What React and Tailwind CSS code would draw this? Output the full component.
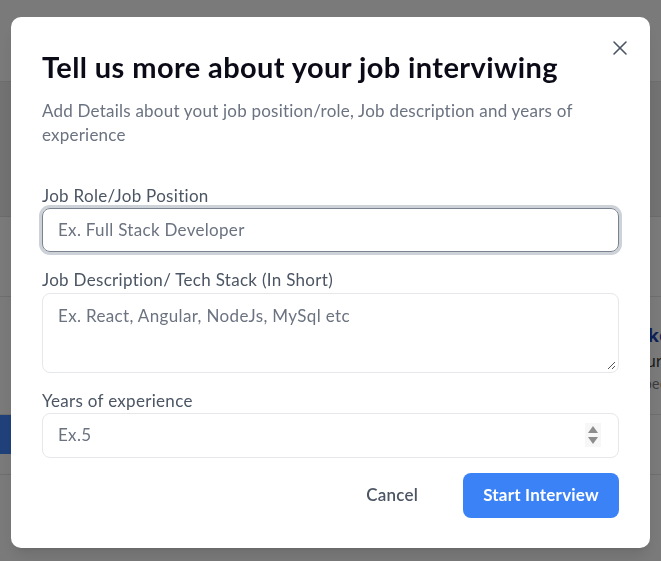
import { X } from 'lucide-react'

const font = { fontFamily: 'Lato, "Noto Sans", sans-serif' }

// dimmed dashboard that sits behind the dialog
const Backdrop = () => {
  return (
    <div className="h-[561px] overflow-hidden bg-[#f4f4f4]">
      <div className="h-[82px] border-b border-[#dadada]" />
      <div className="h-[135px] bg-[#e5e5e5] border-b border-[#d6d6d6]" />
      <div className="h-[80px] border-b border-[#dcdcdc]" />
      <div className="grid grid-cols-[628px_1fr] h-[118px] border-b border-[#dcdcdc]">
        <div />
        <div className="pt-[26px] whitespace-nowrap overflow-hidden">
          <div className="text-[18px] font-bold text-[#1e40af] leading-[24px]">Take a mock</div>
          <div className="mt-[2px] text-[16px] text-[#333] leading-[24px]">Your next</div>
          <div className="text-[14px] text-[#777] leading-[22px]">Expected</div>
        </div>
      </div>
      <div className="h-[39px] w-[220px] bg-[#3f83f5]" />
      <div className="h-[21px] border-b border-[#dcdcdc]" />
    </div>
  )
}

const Label = ({ children, className = '' }) => (
  <label className={`block text-[17px] leading-[24px] tracking-[0.3px] text-[#4b5563] ${className}`}>
    {children}
  </label>
)

const Spinner = () => (
  <svg width="16" height="24" viewBox="0 0 16 24" className="shrink-0">
    <rect width="16" height="24" fill="#f7f7f7" />
    <path d="M8 3 L13 10 L3 10 Z" fill="#8d8d8d" />
    <path d="M3 14 L13 14 L8 21 Z" fill="#8d8d8d" />
  </svg>
)

const ResizeHandle = () => (
  <svg width="9" height="9" viewBox="0 0 9 9" className="shrink-0">
    <path d="M8 1 L1 8 M8 5 L5 8" stroke="#555" strokeWidth="1" />
  </svg>
)

const InterviewDialog = () => {
  return (
    <div className="relative w-[639px] rounded-[10px] bg-white px-[31px] pt-[33px] pb-[30px] shadow-lg" style={font}>
      <button className="absolute right-[18px] top-[19px] text-[#4b5563]">
        <X size={24} strokeWidth={1.6} />
      </button>

      <h2 className="text-[29px] leading-[34px] font-bold text-[#0b0b18] tracking-[0.4px]">
        Tell us more about your job interviwing
      </h2>
      <p className="mt-[15px] text-[17px] leading-[24px] tracking-[0.22px] text-[#6b7280]">
        Add Details about yout job position/role, Job description and years of experience
      </p>

      <Label className="mt-[37px]">Job Role/Job Position</Label>
      <div className="h-[44px] rounded-[8px] border border-[#7b8290] ring-[3px] ring-[#cdd2d9] flex items-center px-[15px]">
        <input
          className="w-full bg-transparent outline-none text-[17px] tracking-[0.3px] text-[#6b7280] placeholder:text-[#6b7280]"
          placeholder="Ex. Full Stack Developer"
          style={font}
        />
      </div>

      <Label className="mt-4">Job Description/ Tech Stack (In Short)</Label>
      <div className="mt-px h-[80px] rounded-[8px] border border-[#e5e7eb] flex flex-col pl-[15px] pr-[2px] pt-[10px] pb-[2px]">
        <div className="flex-1 text-[17px] leading-[24px] tracking-[0.35px] text-[#6b7280]">
          Ex. React, Angular, NodeJs, MySql etc
        </div>
        <div className="flex justify-end">
          <ResizeHandle />
        </div>
      </div>

      <Label className="mt-4">Years of experience</Label>
      <div className="h-[45px] rounded-[8px] border border-[#e5e7eb] flex items-center pl-[15px] pr-[17px]">
        <input
          className="flex-1 bg-transparent outline-none text-[17px] tracking-[0.3px] text-[#6b7280] placeholder:text-[#6b7280]"
          placeholder="Ex.5"
          style={font}
        />
        <Spinner />
      </div>

      <div className="mt-[15px] flex justify-end items-center gap-[25px]">
        <button className="h-[45px] px-5 text-[17px] font-semibold text-[#4b5563] tracking-[0.2px]">
          Cancel
        </button>
        <button className="h-[45px] w-[156px] rounded-[8px] bg-[#3b82f6] text-[17px] font-bold text-white tracking-[0.2px]">
          Start Interview
        </button>
      </div>
    </div>
  )
}

const App = () => {
  return (
    <div className="relative h-[561px] overflow-hidden">
      <Backdrop />
      <div className="fixed inset-0 bg-black/50 flex items-center justify-center pt-[3px]">
        <InterviewDialog />
      </div>
    </div>
  )
}

export default App
